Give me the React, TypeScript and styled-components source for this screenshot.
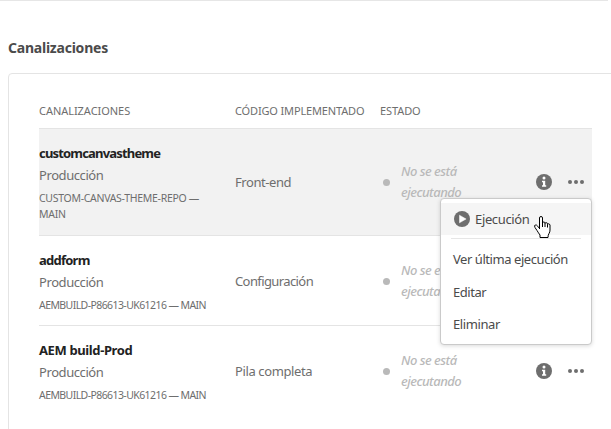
import React from "react";
import styled, { createGlobalStyle } from "styled-components";

const GlobalStyle = createGlobalStyle`
  *, *::before, *::after { box-sizing: border-box; }
  html, body { margin: 0; padding: 0; background: #fff; overflow: hidden; }
  body { font-family: "Noto Sans", "Open Sans", sans-serif; color: #4b4b4b; }
`;

const Page = styled.main`
  height: 429px;
  overflow: hidden;
  padding-left: 8px;
`;

const TopRule = styled.div`
  height: 1px;
  margin-left: -8px;
  width: 608px;
  background: #e6e6e6;
`;

const Heading = styled.h1`
  margin: 36px 0 15px;
  font-size: 14px;
  line-height: 21px;
  font-weight: 700;
  letter-spacing: -0.23px;
  color: #4b4b4b;
`;

const Card = styled.section`
  height: 400px;
  width: 640px;
  border: 1px solid #e4e4e4;
  border-radius: 4px;
  padding: 25px 0 0 30px;
`;

const Table = styled.div`
  width: 553px;
`;

const columns = "196px 145px 143px 1fr";

const HeaderRow = styled.div`
  display: grid;
  grid-template-columns: ${columns};
  height: 30px;
  padding-top: 4px;
  border-bottom: 1px solid #e4e4e4;
  font-size: 11px;
  line-height: 16px;
  color: #6e6e6e;
`;

const HeaderCell = styled.span<{ $track: number }>`
  white-space: nowrap;
  letter-spacing: ${(p) => p.$track}px;
`;

const Row = styled.div<{ $active?: boolean }>`
  display: grid;
  grid-template-columns: ${columns};
  align-items: center;
  padding: 13px 0 ${(p) => (p.$active ? 13 : 12)}px;
  border-bottom: 1px solid #e4e4e4;
  background: ${(p) => (p.$active ? "#f2f2f2" : "#fff")};

  &:last-child {
    border-bottom-color: transparent;
  }
`;

const Name = styled.div<{ $track: number }>`
  font-size: 13px;
  line-height: 22px;
  font-weight: 700;
  letter-spacing: ${(p) => p.$track}px;
  color: #222;
`;

const Environment = styled.div`
  font-size: 13px;
  line-height: 22px;
  letter-spacing: -0.42px;
  color: #6e6e6e;
`;

const Repo = styled.div<{ $track: number }>`
  margin-top: 4px;
  font-size: 10.5px;
  line-height: 16px;
  letter-spacing: ${(p) => p.$track}px;
  white-space: pre-line;
  color: #6e6e6e;
`;

const Code = styled.div<{ $track: number }>`
  font-size: 13px;
  line-height: 22px;
  letter-spacing: ${(p) => p.$track}px;
  color: #6e6e6e;
`;

const Status = styled.div`
  display: flex;
  align-items: center;
  gap: 12px;
  padding-left: 2.500px;
`;

const Dot = styled.span`
  width: 7px;
  height: 7px;
  margin-right: -0.500px;
  border-radius: 50%;
  background: #b9b9b9;
`;

const StatusText = styled.em`
  font-size: 13px;
  line-height: 21px;
  letter-spacing: -0.5px;
  font-weight: 500;
  white-space: pre-line;
  color: #b9b9b9;
`;

const Actions = styled.div`
  display: flex;
  align-items: center;
  justify-content: flex-end;
  gap: 16px;
  padding-right: 8px;
  position: relative;
`;

const Menu = styled.div`
  position: absolute;
  z-index: 1;
  top: 24px;
  right: 0;
  width: 152px;
  height: 147px;
  padding-top: 4px;
  background: #fff;
  border: 1px solid #cacaca;
  border-radius: 4px;
  box-shadow: 0 1px 4px rgba(0, 0, 0, 0.15);
  color: #4b4b4b;
`;

const MenuItem = styled.div<{ $track: number; $hover?: boolean }>`
  display: flex;
  align-items: center;
  gap: 5px;
  height: ${(p) => (p.$hover ? 32 : 32.5)}px;
  padding-left: ${(p) => (p.$hover ? 13 : 12)}px;
  background: ${(p) => (p.$hover ? "#f5f5f5" : "transparent")};
  font-size: 13px;
  line-height: 20px;
  letter-spacing: ${(p) => p.$track}px;
  white-space: nowrap;
`;

const Divider = styled.div`
  height: 1px;
  margin: 3px 10px 4px;
  background: #e6e6e6;
`;

const Pointer = styled.svg`
  position: absolute;
  z-index: 2;
  top: 17px;
  left: 93px;
`;

const InfoIcon = () => (
  <svg width="16" height="16" viewBox="0 0 16 16">
    <circle cx="8" cy="8" r="8" fill="#6e6e6e" />
    <circle cx="8" cy="4.1" r="1.5" fill="#fff" />
    <path d="M6 6.7h3.2v4.6h1v1.5H6v-1.5h1V8.2H6z" fill="#fff" />
  </svg>
);

const MoreIcon = () => (
  <svg width="16" height="6" viewBox="0 0 16 6" fill="#6e6e6e">
    <circle cx="2" cy="3" r="2" />
    <circle cx="8" cy="3" r="2" />
    <circle cx="14" cy="3" r="2" />
  </svg>
);

const PlayIcon = () => (
  <svg width="16" height="16" viewBox="0 0 16 16">
    <circle cx="8" cy="8" r="8" fill="#6e6e6e" />
    <path d="M5.500 4.200v7.600L12.100 8z" fill="#fff" stroke="#fff" strokeWidth=".5" strokeLinejoin="round" />
  </svg>
);

const HandPointer = () => (
  <Pointer width="17" height="22" viewBox="0 0 17 22">
    <path
      d="M5.500 13V2q0-1.500 1.500-1.500T8.500 2v5q0-1 1.200-1T11 7v.5q0-.8 1.200-.8t1.300 1V8.500q.2-.7 1.100-.7T16 9v5q0 2-1 3.500t-1 4H6v-2.500Q4.500 17 3 14.500L1 11.500Q0 9.500 1.200 9t2.500 1.200L5.500 12.500"
      fill="#fff"
      stroke="#000"
      strokeLinejoin="round"
    />
    <path d="M8.500 7v4M11 7.500v3.500M13.500 8.500v3" stroke="#000" fill="none" />
  </Pointer>
);

const pipelines = [
  { name: "customcanvastheme", nameTrack: -0.82, repo: "CUSTOM-CANVAS-THEME-REPO —\nMAIN", repoTrack: -0.3, code: "Front-end", codeTrack: -0.43, active: true },
  { name: "addform", nameTrack: -0.76, repo: "AEMBUILD-P86613-UK61216 — MAIN", repoTrack: -0.58, code: "Configuración", codeTrack: -0.6 },
  { name: "AEM build-Prod", nameTrack: -0.38, repo: "AEMBUILD-P86613-UK61216 — MAIN", repoTrack: -0.58, code: "Pila completa", codeTrack: -0.38 },
];

export default function App() {
  return (
    <Page>
      <GlobalStyle />
      <TopRule />
      <Heading>Canalizaciones</Heading>
      <Card>
        <Table>
          <HeaderRow>
            <HeaderCell $track={-0.04}>CANALIZACIONES</HeaderCell>
            <HeaderCell $track={-0.15}>CÓDIGO IMPLEMENTADO</HeaderCell>
            <HeaderCell $track={-0.1}>ESTADO</HeaderCell>
          </HeaderRow>
          {pipelines.map((p) => (
            <Row key={p.name} $active={p.active}>
              <div>
                <Name $track={p.nameTrack}>{p.name}</Name>
                <Environment>Producción</Environment>
                <Repo $track={p.repoTrack}>{p.repo}</Repo>
              </div>
              <Code $track={p.codeTrack}>{p.code}</Code>
              <Status>
                <Dot />
                <StatusText>{"No se está\nejecutando"}</StatusText>
              </Status>
              <Actions>
                <InfoIcon />
                <MoreIcon />
                {p.active && (
                  <Menu>
                    <MenuItem $hover $track={-0.35}>
                      <PlayIcon />
                      Ejecución
                    </MenuItem>
                    <Divider />
                    <MenuItem $track={-0.44}>Ver última ejecución</MenuItem>
                    <MenuItem $track={-0.45}>Editar</MenuItem>
                    <MenuItem $track={-0.4}>Eliminar</MenuItem>
                    <HandPointer />
                  </Menu>
                )}
              </Actions>
            </Row>
          ))}
        </Table>
      </Card>
    </Page>
  );
}
